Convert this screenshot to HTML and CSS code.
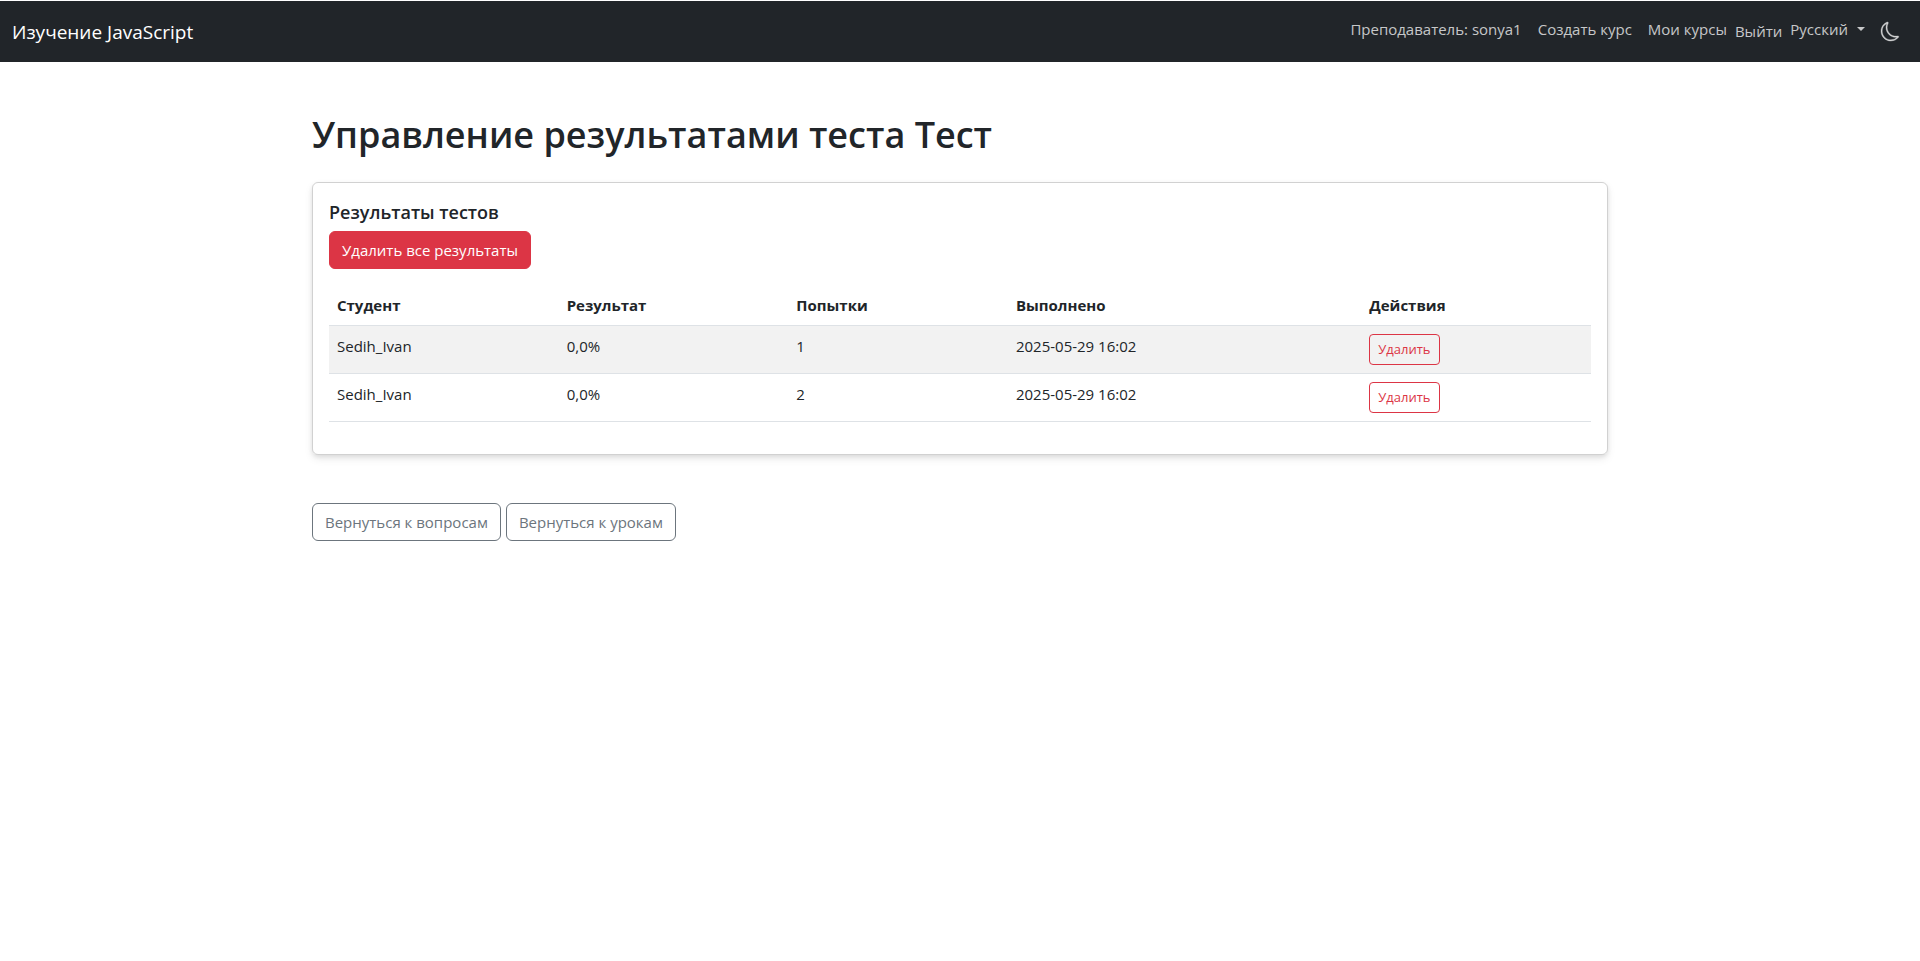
FILE: index.html
```html
<!DOCTYPE html>
<html lang="ru">
<head>
<meta charset="utf-8">
<meta name="viewport" content="width=device-width, initial-scale=1">
<title>Управление результатами теста</title>
<link rel="stylesheet" href="styles.css">
</head>
<body>
<header class="navbar">
  <a class="navbar-brand" href="#">Изучение JavaScript</a>
  <nav class="navbar-nav">
    <a class="nav-link" href="#">Преподаватель: sonya1</a>
    <a class="nav-link" href="#">Создать курс</a>
    <a class="nav-link" href="#">Мои курсы</a>
    <button class="nav-logout" type="button">Выйти</button>
    <button class="nav-link lang-toggle" type="button">Русский<span class="caret"></span></button>
    <button class="theme-toggle" type="button" aria-label="Тёмная тема">
      <svg class="theme-icon" viewBox="0 0 16 16" fill="currentColor" stroke="currentColor" stroke-width=".3" aria-hidden="true"><path d="M6 .278a.77.77 0 0 1 .08.858 7.2 7.2 0 0 0-.878 3.46c0 4.021 3.278 7.277 7.318 7.277q.792-.001 1.533-.16a.79.79 0 0 1 .81.316.73.73 0 0 1-.031.893A8.35 8.35 0 0 1 8.344 16C3.734 16 0 12.286 0 7.71 0 4.266 2.114 1.312 5.124.06A.75.75 0 0 1 6 .278M4.858 1.311A7.27 7.27 0 0 0 1.025 7.71c0 4.02 3.279 7.276 7.319 7.276a7.32 7.32 0 0 0 5.205-2.162q-.506.063-1.029.063c-4.61 0-8.343-3.714-8.343-8.29 0-1.167.242-2.278.681-3.286"/></svg>
    </button>
  </nav>
</header>
<main class="container">
  <h1 class="page-title">Управление результатами теста Тест</h1>
  <section class="card">
    <h2 class="card-title">Результаты тестов</h2>
    <button class="btn btn-danger" type="button">Удалить все результаты</button>
    <table class="results">
      <colgroup>
        <col class="col-student"><col class="col-score"><col class="col-tries"><col class="col-date"><col>
      </colgroup>
      <thead>
        <tr><th scope="col">Студент</th><th scope="col">Результат</th><th scope="col">Попытки</th><th scope="col">Выполнено</th><th scope="col">Действия</th></tr>
      </thead>
      <tbody>
        <tr><td>Sedih_Ivan</td><td>0,0%</td><td>1</td><td>2025-05-29 16:02</td><td><button class="btn btn-small" type="button">Удалить</button></td></tr>
        <tr><td>Sedih_Ivan</td><td>0,0%</td><td>2</td><td>2025-05-29 16:02</td><td><button class="btn btn-small" type="button">Удалить</button></td></tr>
      </tbody>
    </table>
  </section>
  <div class="page-actions">
    <a class="btn btn-secondary" href="#">Вернуться к вопросам</a>
    <a class="btn btn-secondary" href="#">Вернуться к урокам</a>
  </div>
</main>
</body>
</html>
```
FILE: styles.css
```css
*, *::before, *::after { box-sizing: border-box; }

body {
  margin: 0;
  border-top: 1px solid #fff;
  font-family: "Segoe UI", "Open Sans", sans-serif;
  font-size: 15px;
  line-height: 24px;
  color: #212529;
  background: #fff;
}

button { font: inherit; cursor: pointer; }
a { text-decoration: none; }

.navbar {
  display: flex;
  align-items: center;
  justify-content: space-between;
  padding: 8px 12px;
  background: #212529;
}

.navbar-brand {
  font-size: 19px;
  line-height: 30px;
  color: #fff;
}

.navbar-nav {
  display: flex;
  align-items: flex-start;
  min-height: 45px;
}

.nav-link {
  padding: 8px;
  border: 0;
  background: none;
  color: rgba(255, 255, 255, 0.75);
}

.nav-logout {
  padding: 10px 0;
  border: 0;
  background: none;
  color: rgba(255, 255, 255, 0.75);
}

.lang-toggle {
  display: flex;
  align-items: center;
  gap: 9px;
}

.caret {
  border: 4px solid transparent;
  border-top-color: currentColor;
  border-bottom: 0;
}

.theme-toggle {
  display: flex;
  padding: 13px 8px;
  border: 0;
  background: none;
  color: rgba(255, 255, 255, 0.75);
}

.theme-icon {
  width: 19px;
  height: 19px;
  overflow: visible;
}

.container {
  max-width: 1320px;
  margin: 48px auto 0;
  padding: 0 12px;
}

.page-title {
  margin: 0 0 22px;
  font-size: 36px;
  font-weight: 600;
  line-height: 50px;
}

.card {
  padding: 16px;
  border: 1px solid rgba(0, 0, 0, 0.18);
  border-radius: 6px;
  box-shadow: 0 2px 4px rgba(0, 0, 0, 0.08), 0 4px 8px rgba(0, 0, 0, 0.08);
}

.card-title {
  margin: 0 0 6px;
  font-size: 18px;
  font-weight: 600;
  line-height: 26px;
}

.btn {
  display: inline-block;
  padding: 6px 12px;
  border: 1px solid;
  border-radius: 6px;
  background: none;
  vertical-align: middle;
}

.btn-danger {
  border-color: #dc3545;
  background: #dc3545;
  color: #fff;
}

.btn-small {
  display: block;
  padding: 4px 8px;
  border-radius: 4px;
  font-size: 13px;
  line-height: 21px;
  color: #dc3545;
}

.btn-secondary { color: #6c757d; }

.results {
  width: 100%;
  margin: 16px 0;
  border-collapse: collapse;
  table-layout: fixed;
}

.results th,
.results td {
  padding: 8px;
  border-bottom: 1px solid #dee2e6;
  text-align: left;
  vertical-align: top;
}

.results th { font-weight: 700; }
.results tbody tr:nth-child(odd) { background: #f2f2f2; }

.col-student, .col-score { width: 18.2%; }
.col-tries { width: 17.4%; }
.col-date { width: 28%; }

.page-actions {
  display: flex;
  flex-wrap: wrap;
  gap: 5px;
  margin-top: 48px;
}
```
